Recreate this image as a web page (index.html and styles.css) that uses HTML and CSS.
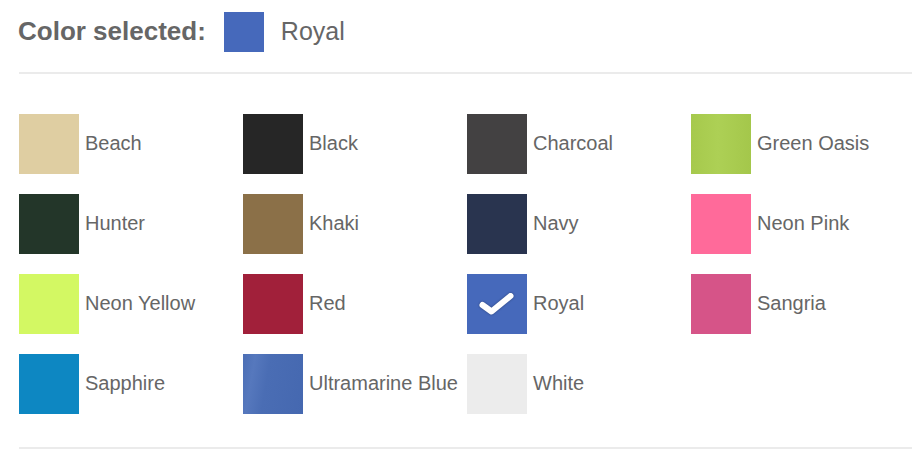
FILE: index.html
```html
<!DOCTYPE html>
<html lang="en">
<head>
<meta charset="utf-8">
<title>Color selector</title>
<link rel="stylesheet" href="styles.css">
</head>
<body>
<div class="picker">
  <div class="selected">
    <span class="selected-label">Color selected:</span>
    <span class="chip c-royal"></span>
    <span class="selected-name">Royal</span>
  </div>
  <ul class="grid">
    <li class="opt"><span class="sw c-beach"></span><span class="name">Beach</span></li>
    <li class="opt"><span class="sw c-black"></span><span class="name">Black</span></li>
    <li class="opt"><span class="sw c-charcoal"></span><span class="name">Charcoal</span></li>
    <li class="opt"><span class="sw c-green"></span><span class="name">Green Oasis</span></li>
    <li class="opt"><span class="sw c-hunter"></span><span class="name">Hunter</span></li>
    <li class="opt"><span class="sw c-khaki"></span><span class="name">Khaki</span></li>
    <li class="opt"><span class="sw c-navy"></span><span class="name">Navy</span></li>
    <li class="opt"><span class="sw c-pink"></span><span class="name">Neon Pink</span></li>
    <li class="opt"><span class="sw c-yellow"></span><span class="name">Neon Yellow</span></li>
    <li class="opt"><span class="sw c-red"></span><span class="name">Red</span></li>
    <li class="opt"><span class="sw c-royal is-selected"><svg class="check" viewBox="0 0 60 60" width="60" height="60"><path d="M15.5 31 L24.5 37.5 L43.5 22" fill="none" stroke="#fff" stroke-width="6" stroke-linecap="round" stroke-linejoin="round"/></svg></span><span class="name">Royal</span></li>
    <li class="opt"><span class="sw c-sangria"></span><span class="name">Sangria</span></li>
    <li class="opt"><span class="sw c-sapphire"></span><span class="name">Sapphire</span></li>
    <li class="opt"><span class="sw c-ultra"></span><span class="name">Ultramarine Blue</span></li>
    <li class="opt"><span class="sw c-white"></span><span class="name">White</span></li>
  </ul>
</div>
</body>
</html>
```
FILE: styles.css
```css
html, body {
  margin: 0;
  padding: 0;
  background: #fff;
}
body {
  font-family: "Liberation Sans", Arial, Helvetica, sans-serif;
  color: #666;
}
.picker {
  padding-left: 19px;
}
.selected {
  display: flex;
  align-items: center;
  padding-top: 12px;
  padding-bottom: 20px;
  border-bottom: 2px solid #ebebeb;
}
.selected-label {
  font-size: 26px;
  font-weight: bold;
  color: #666;
  margin-left: -1px;
  margin-top: -1px;
}
.chip {
  width: 40px;
  height: 40px;
  margin-left: 18px;
}
.selected-name {
  font-size: 25px;
  margin-left: 17px;
  margin-top: -1px;
}
.grid {
  list-style: none;
  margin: 40px 0 0;
  padding: 0 0 33px;
  display: grid;
  grid-template-columns: repeat(4, 224px);
  row-gap: 20px;
  border-bottom: 2px solid #ebebeb;
}
.opt {
  display: flex;
  align-items: center;
  gap: 6px;
  height: 60px;
}
.sw {
  width: 60px;
  height: 60px;
  flex: none;
  position: relative;
}
.name {
  font-size: 20px;
  color: #666;
  margin-top: -2px;
}
.check {
  position: absolute;
  left: 0;
  top: 0;
  filter: drop-shadow(0 0 1px rgba(0,0,0,0.35));
}
.c-beach { background: #dfcea2; }
.c-black { background: #262626; }
.c-charcoal { background: #434142; }
.c-green { background: linear-gradient(90deg, #a6c94c 0%, #add055 45%, #a4c74b 100%); }
.c-hunter { background: #233629; }
.c-khaki { background: #8b7048; }
.c-navy { background: #29344f; }
.c-pink { background: #ff6a9a; }
.c-yellow { background: #d3f863; }
.c-red { background: #a1203a; }
.c-royal { background: #4669bb; }
.c-sangria { background: #d65488; }
.c-sapphire { background: #0d87c2; }
.c-ultra { background: linear-gradient(100deg, #4b6eb5 0%, #5678bd 18%, #4a6db4 40%, #4568b0 100%); }
.c-white { background: #ececec; }
```
